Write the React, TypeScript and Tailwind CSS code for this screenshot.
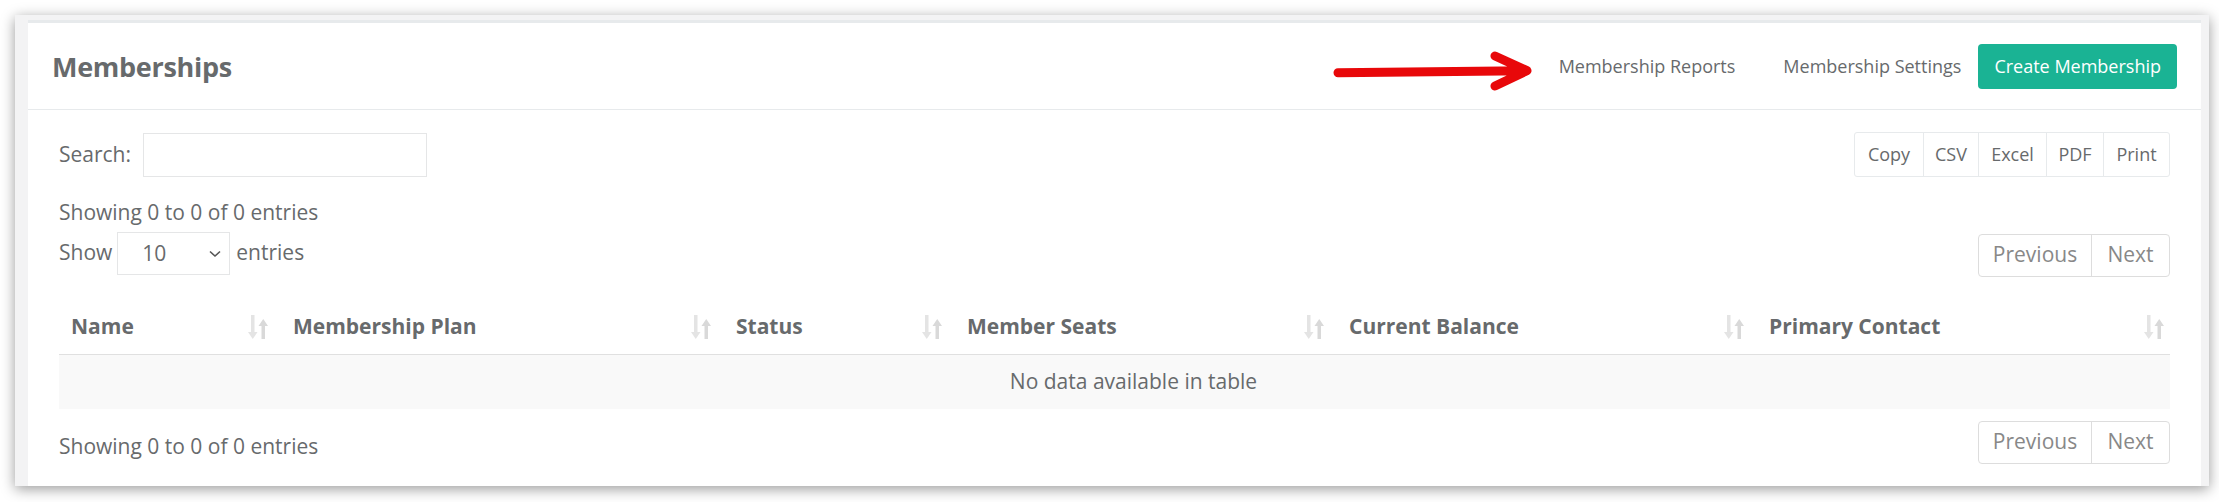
import React from "react";

const columns = [
  { label: "Name", w: 222 },
  { label: "Membership Plan", w: 443 },
  { label: "Status", w: 231 },
  { label: "Member Seats", w: 382 },
  { label: "Current Balance", w: 420 },
  { label: "Primary Contact", w: 413 },
];

const exportButtons = [
  { label: "Copy", w: 68 },
  { label: "CSV", w: 55 },
  { label: "Excel", w: 68 },
  { label: "PDF", w: 57 },
  { label: "Print", w: 66 },
];

function SortIcon() {
  return (
    <svg width="22" height="24" viewBox="0 0 22 24" className="shrink-0">
      <rect x="4" y="0" width="3.5" height="19" fill="#e4e4e4" />
      <polygon points="1,17 10.5,17 5.75,24" fill="#e4e4e4" />
      <polygon points="11.5,11 21,11 16.25,4" fill="#d9d9d9" />
      <rect x="14.5" y="10" width="3.5" height="14" fill="#d9d9d9" />
    </svg>
  );
}

function Pager() {
  return (
    <div className="flex h-[43px] overflow-hidden rounded-[4px] border border-[#dddddd] text-[21px] text-[#888888]">
      <div className="flex w-[113px] items-center justify-center border-r border-[#dddddd]">Previous</div>
      <div className="flex w-[77px] items-center justify-center">Next</div>
    </div>
  );
}

function Arrow() {
  // red annotation pointing at "Membership Reports"
  return (
    <svg
      width="205"
      height="42"
      viewBox="0 0 205 42"
      className="pointer-events-none absolute left-[1330px] top-[50px]"
    >
      <path
        d="M8 22.7 L195 20.7 M165 6 L197 20.7 L165 36"
        fill="none"
        stroke="#e8080a"
        strokeWidth="9"
        strokeLinecap="round"
        strokeLinejoin="round"
      />
    </svg>
  );
}

export default function App() {
  return (
    <div
      className="relative h-[502px] w-[2219px] overflow-hidden bg-white text-[#676a6c]"
      style={{ fontFamily: '"Open Sans", "Liberation Sans", sans-serif' }}
    >
      <div className="ml-[15px] mt-[15px] h-[471px] w-[2194px] bg-[#f3f3f4] pl-[13px] pr-[8px] pt-[5px] shadow-[0_3px_13px_rgba(0,0,0,0.4)]">
        <div className="h-full border-t-[3px] border-[#e7eaec] bg-white">
          {/* Header */}
          <div className="flex h-[87px] items-center justify-between border-b border-[#e7eaec] px-[24px]">
            <h1 className="text-[27px] font-bold leading-none tracking-[-0.3px] text-[#676a6c]">Memberships</h1>
            <div className="flex items-center text-[18px]">
              <span>Membership Reports</span>
              <span className="ml-[48px]">Membership Settings</span>
              <button className="ml-[17px] flex h-[45px] items-center rounded-[4px] bg-[#1ab394] px-[16px] text-white">
                Create Membership
              </button>
            </div>
          </div>

          {/* Body */}
          <div className="px-[31px] pb-[22px] pt-[22px] text-[21px] leading-[1.5]">
            <div className="flex items-start justify-between">
              <div className="flex h-[45px] items-center">
                <span>Search:</span>
                <input className="ml-[12px] h-[44px] w-[284px] border border-[#e5e6e7] outline-none" />
              </div>
              <div className="flex h-[45px] overflow-hidden rounded-[3px] border border-[#e7eaec] text-[18px]">
                {exportButtons.map((b, i) => (
                  <div
                    key={b.label}
                    className={`flex items-center justify-center ${i > 0 ? "border-l border-[#e7eaec]" : ""}`}
                    style={{ width: b.w }}
                  >
                    {b.label}
                  </div>
                ))}
              </div>
            </div>

            <div className="mt-[20px]">Showing 0 to 0 of 0 entries</div>

            <div className="mt-[3px] flex items-start justify-between">
              <div className="flex h-[43px] items-center">
                <span>Show</span>
                <div className="relative ml-[5px] h-[43px] w-[113px] border border-[#e5e6e7] pl-[24px] pt-[5px] leading-[31px]">
                  10
                  <svg width="12" height="8" viewBox="0 0 12 8" className="absolute right-[8px] top-[17px]">
                    <path d="M1 1.5 L6 6 L11 1.5" fill="none" stroke="#555" strokeWidth="1.6" />
                  </svg>
                </div>
                <span className="ml-[6px]">entries</span>
              </div>
              <div className="mt-[2px]">
                <Pager />
              </div>
            </div>

            <table className="mt-[23px] w-[2111px] table-fixed border-collapse">
              <colgroup>
                {columns.map((c) => (
                  <col key={c.label} style={{ width: c.w }} />
                ))}
              </colgroup>
              <thead>
                <tr className="h-[55px] border-b border-[#e0e0e0]">
                  {columns.map((c, i) => (
                    <th
                      key={c.label}
                      className={`pl-[12px] text-left font-bold ${i === columns.length - 1 ? "pr-[5px]" : "pr-[12px]"}`}
                    >
                      <div className="flex items-center justify-between">
                        <span>{c.label}</span>
                        <SortIcon />
                      </div>
                    </th>
                  ))}
                </tr>
              </thead>
              <tbody>
                <tr className="h-[54px] bg-[#f9f9f9]">
                  <td colSpan={6} className="pl-[38px] text-center">
                    No data available in table
                  </td>
                </tr>
              </tbody>
            </table>

            <div className="mt-[12px] flex items-start justify-between">
              <div className="mt-[10px]">Showing 0 to 0 of 0 entries</div>
              <Pager />
            </div>
          </div>
        </div>
      </div>
      <Arrow />
    </div>
  );
}
